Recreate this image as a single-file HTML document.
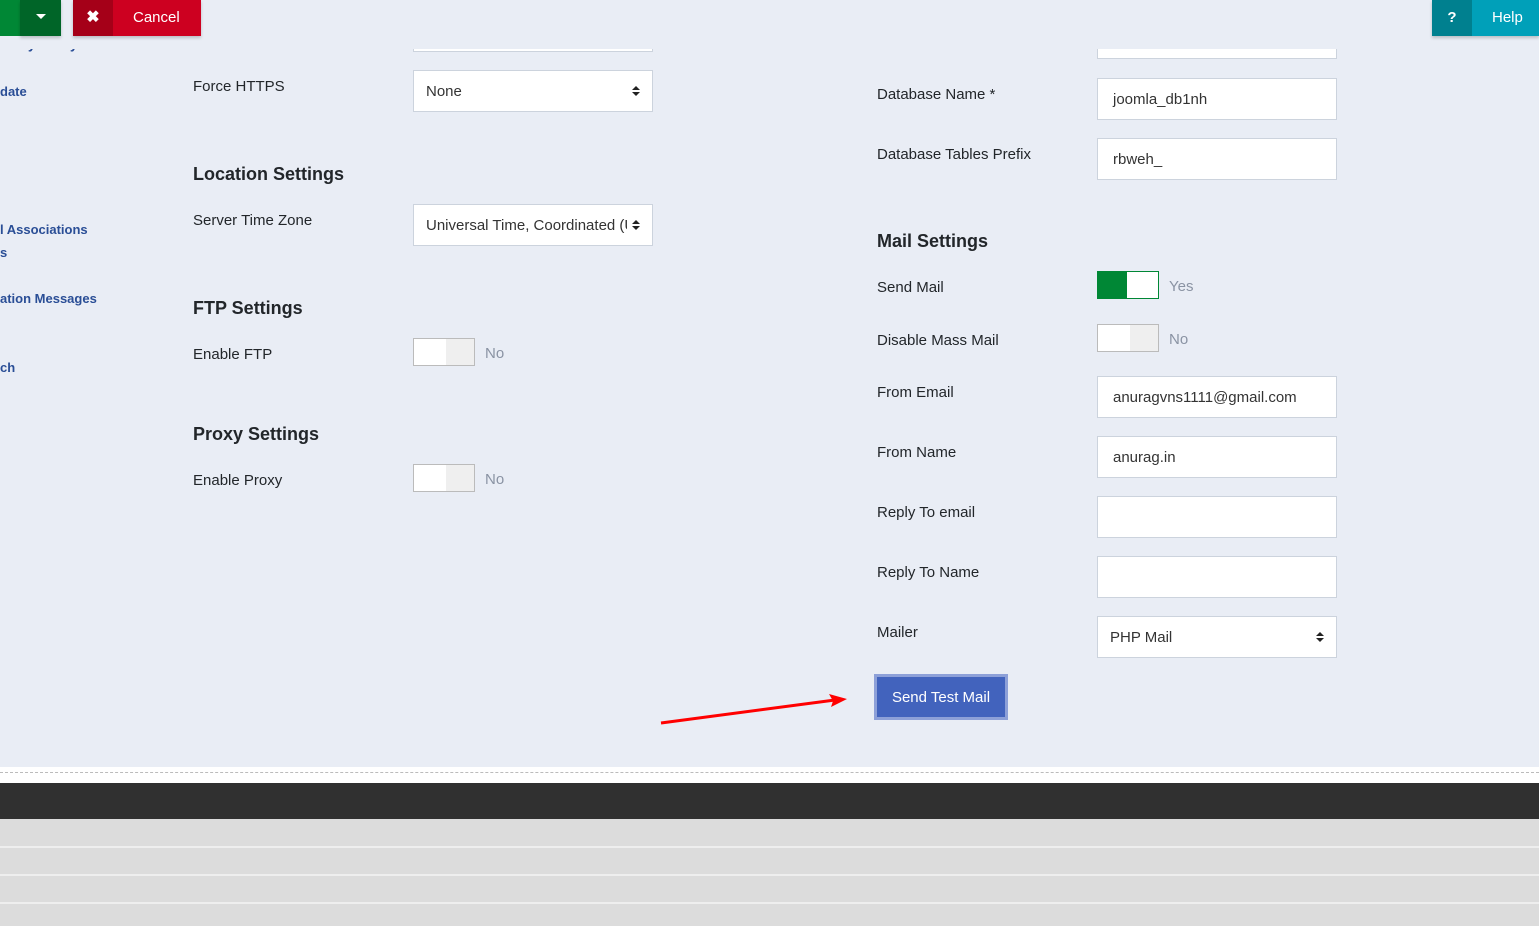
<!DOCTYPE html>
<html><head><meta charset="utf-8"><style>
*{box-sizing:border-box;margin:0;padding:0}
body{width:1539px;height:926px;overflow:hidden;background:#e9edf5;font-family:"Liberation Sans",sans-serif;color:#22262a;position:relative;font-size:15px}
.a{position:absolute}
.lbl{position:absolute;font-size:15px;color:#22262a;margin-top:1px}
.h{position:absolute;font-size:18px;font-weight:bold;color:#22262a}
.in{position:absolute;width:240px;height:42px;background:#fff;border:1px solid #ccd3dd;font-size:15px;color:#333;padding:0 15px;line-height:42px;white-space:nowrap;overflow:hidden}
.sel{padding-left:12px}
.arr{position:absolute;right:12px;top:15px;width:8px;height:12px}
.arr:before{content:"";position:absolute;left:0;top:0;border-left:4px solid transparent;border-right:4px solid transparent;border-bottom:4px solid #222}
.arr:after{content:"";position:absolute;left:0;top:6px;border-left:4px solid transparent;border-right:4px solid transparent;border-top:4px solid #222}
.sw{position:absolute;width:62px;height:28px;border:1px solid #bbb;background:#efefef}
.sw i{position:absolute;left:0;top:0;width:32px;height:26px;background:#fff}
.st{position:absolute;font-size:15px;color:#8a93a3;margin-top:1px}
.side{position:absolute;font-size:13px;font-weight:bold;color:#2a4e96}
</style></head><body>
<!-- sidebar -->
<div class="side" style="left:0;top:37px">curity Policy</div>
<div class="side" style="left:0;top:84px">date</div>
<div class="side" style="left:0;top:222px">l Associations</div>
<div class="side" style="left:0;top:245px">s</div>
<div class="side" style="left:0;top:291px">ation Messages</div>
<div class="side" style="left:0;top:360px">ch</div>
<!-- left column -->
<div class="in" style="left:413px;top:10px"></div>
<div class="lbl" style="left:193px;top:77px">Force HTTPS</div>
<div class="in sel" style="left:413px;top:70px">None<span class="arr"></span></div>
<div class="h" style="left:193px;top:164px">Location Settings</div>
<div class="lbl" style="left:193px;top:211px">Server Time Zone</div>
<div class="in sel" style="left:413px;top:204px"><span class="a" style="left:12px;top:0;width:201px;overflow:hidden">Universal Time, Coordinated (UTC)</span><span class="arr"></span></div>
<div class="h" style="left:193px;top:298px">FTP Settings</div>
<div class="lbl" style="left:193px;top:345px">Enable FTP</div>
<div class="sw" style="left:413px;top:338px"><i></i></div><div class="st" style="left:485px;top:344px">No</div>
<div class="h" style="left:193px;top:424px">Proxy Settings</div>
<div class="lbl" style="left:193px;top:471px">Enable Proxy</div>
<div class="sw" style="left:413px;top:464px"><i></i></div><div class="st" style="left:485px;top:470px">No</div>
<!-- right column -->
<div class="in" style="left:1097px;top:17px"></div>
<div class="lbl" style="left:877px;top:85px">Database Name *</div>
<div class="in" style="left:1097px;top:78px">joomla_db1nh</div>
<div class="lbl" style="left:877px;top:145px">Database Tables Prefix</div>
<div class="in" style="left:1097px;top:138px">rbweh_</div>
<div class="h" style="left:877px;top:231px">Mail Settings</div>
<div class="lbl" style="left:877px;top:278px">Send Mail</div>
<div class="sw" style="left:1097px;top:271px;border-color:#008735;background:#008735"><i style="left:29px;width:31px"></i></div><div class="st" style="left:1169px;top:277px">Yes</div>
<div class="lbl" style="left:877px;top:331px">Disable Mass Mail</div>
<div class="sw" style="left:1097px;top:324px"><i></i></div><div class="st" style="left:1169px;top:330px">No</div>
<div class="lbl" style="left:877px;top:383px">From Email</div>
<div class="in" style="left:1097px;top:376px">anuragvns1111@gmail.com</div>
<div class="lbl" style="left:877px;top:443px">From Name</div>
<div class="in" style="left:1097px;top:436px">anurag.in</div>
<div class="lbl" style="left:877px;top:503px">Reply To email</div>
<div class="in" style="left:1097px;top:496px"></div>
<div class="lbl" style="left:877px;top:563px">Reply To Name</div>
<div class="in" style="left:1097px;top:556px"></div>
<div class="lbl" style="left:877px;top:623px">Mailer</div>
<div class="in sel" style="left:1097px;top:616px">PHP Mail<span class="arr"></span></div>
<div class="a" style="left:874px;top:674px;width:134px;height:46px;background:#4263bd;border:3px solid #8da0d8;color:#fff;font-size:15px;text-align:center;line-height:41px">Send Test Mail</div>
<svg class="a" style="left:655px;top:690px" width="200" height="40"><line x1="6" y1="33" x2="180" y2="10" stroke="#f00" stroke-width="3"/><polygon points="192,9 174,4 178,11 176,17" fill="#f00"/></svg>
<!-- top cover strip -->
<div class="a" style="left:0;top:0;width:1539px;height:49px;background:#e9edf5"></div>
<!-- toolbar -->
<div class="a" style="left:0;top:0;width:20px;height:36px;background:#008735"></div>
<div class="a" style="left:20px;top:0;width:41px;height:36px;background:#006528;box-shadow:0 2px 3px rgba(0,0,0,.2)"><div class="a" style="left:16px;top:14px;border-left:5px solid transparent;border-right:5px solid transparent;border-top:5px solid #fff"></div></div>
<div class="a" style="left:73px;top:0;width:128px;height:36px;background:#cd0020;box-shadow:0 2px 3px rgba(0,0,0,.2)">
<div class="a" style="left:0;top:0;width:40px;height:36px;background:#a50018;color:#fff;font-weight:bold;font-size:16px;text-align:center;line-height:35px">✖</div>
<div class="a" style="left:60px;top:9px;color:#fff;font-size:15px">Cancel</div></div>
<div class="a" style="left:1432px;top:0;width:107px;height:36px;background:#00a0b9;box-shadow:0 2px 3px rgba(0,0,0,.2)">
<div class="a" style="left:0;top:0;width:40px;height:36px;background:#00808f;color:#fff;font-weight:bold;font-size:15px;text-align:center;line-height:35px">?</div>
<div class="a" style="left:60px;top:9px;color:#fff;font-size:15px">Help</div></div>
<!-- sidebar descenders peek -->
<div class="a" style="left:0;top:49px;width:100px;height:3px;overflow:hidden"><div class="side" style="left:0;top:-12px">curity Policy</div></div>
<!-- footer -->
<div class="a" style="left:0;top:767px;width:1539px;height:16px;background:#fff"></div>
<div class="a" style="left:0;top:772px;width:1539px;border-top:1px dashed #bbb"></div>
<div class="a" style="left:0;top:783px;width:1539px;height:36px;background:#303030"></div>
<div class="a" style="left:0;top:819px;width:1539px;height:107px;background:#dcdcdc"></div>
<div class="a" style="left:0;top:846px;width:1539px;height:2px;background:#eee"></div>
<div class="a" style="left:0;top:874px;width:1539px;height:2px;background:#eee"></div>
<div class="a" style="left:0;top:902px;width:1539px;height:2px;background:#eee"></div>
</body></html>
